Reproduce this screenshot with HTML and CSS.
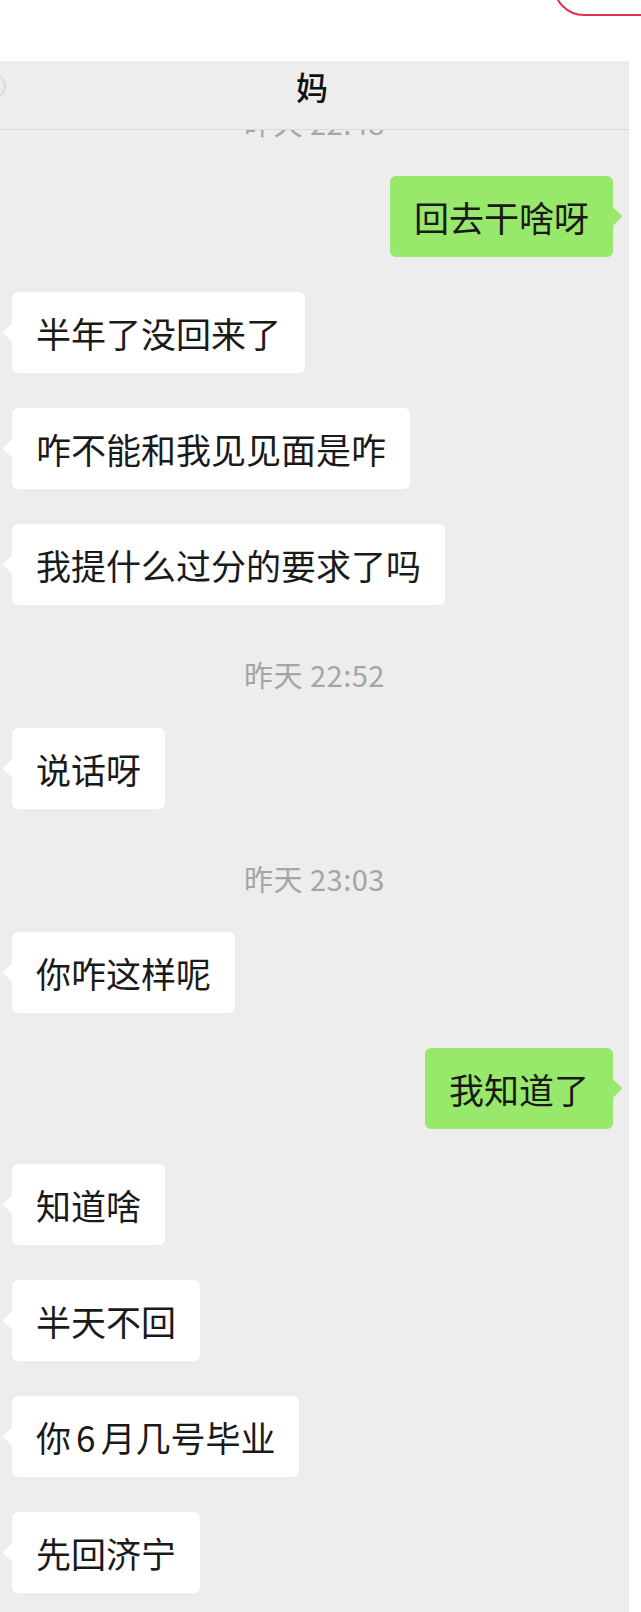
FILE: index.html
```html
<!DOCTYPE html>
<html lang="zh-CN">

<head>
    <meta charset="UTF-8">
    <meta name="viewport" content="width=device-width, initial-scale=1.0">
    <title>妈</title>
    <link rel="stylesheet" href="styles.css">
</head>

<body>
    <!-- 顶部白条 -->
    <div class="top-bar">
        <div class="top-pill"></div>
    </div>

    <!-- 聊天窗口 -->
    <div class="chat">
        <div class="chat-header">
            <span class="back-ghost"></span>
            <h1 class="chat-title">妈</h1>
        </div>

        <div class="messages">
            <div class="time">昨天 22:48</div>
            <div class="row row-me"><div class="bubble bubble-me">回去干啥呀</div></div>
            <div class="row"><div class="bubble">半年了没回来了</div></div>
            <div class="row"><div class="bubble">咋不能和我见见面是咋</div></div>
            <div class="row"><div class="bubble">我提什么过分的要求了吗</div></div>
            <div class="time">昨天 22:52</div>
            <div class="row"><div class="bubble">说话呀</div></div>
            <div class="time">昨天 23:03</div>
            <div class="row"><div class="bubble">你咋这样呢</div></div>
            <div class="row row-me"><div class="bubble bubble-me">我知道了</div></div>
            <div class="row"><div class="bubble">知道啥</div></div>
            <div class="row"><div class="bubble">半天不回</div></div>
            <div class="row"><div class="bubble">你<span class="num">6</span>月几号毕业</div></div>
            <div class="row"><div class="bubble">先回济宁</div></div>
        </div>
    </div>
</body>

</html>
```

FILE: styles.css
```css
/* 全局 */
body {
    margin: 0;
    padding: 0;
    width: 641px;
    height: 1612px;
    background: #ffffff;
    font-family: "Noto Sans CJK SC", "Noto Sans", sans-serif;
    overflow: hidden;
}

/* 顶部白条 */
.top-bar {
    position: relative;
    height: 61px;
    overflow: hidden;
}

.top-pill {
    position: absolute;
    left: 553px;
    top: -46px;
    width: 140px;
    height: 58px;
    border: 2px solid #e0304f;
    border-radius: 31px;
}

/* 聊天窗口 */
.chat {
    position: relative;
    width: 629px;
    height: 1551px;
    background: #ededed;
    overflow: hidden;
}

.chat-header {
    position: absolute;
    top: 0;
    left: 0;
    right: 0;
    height: 68px;
    background: #ededed;
    border-bottom: 1px solid #d9d9d9;
    z-index: 2;
}

.back-ghost {
    position: absolute;
    left: -18px;
    top: 13px;
    width: 20px;
    height: 20px;
    border: 2px solid #dcdcdc;
    border-radius: 50%;
}

.chat-title {
    margin: 0;
    text-align: center;
    font-size: 32px;
    font-weight: 500;
    line-height: 50px;
    color: #111111;
    padding-right: 5px;
}

/* 消息列表 */
.messages {
    display: flex;
    flex-direction: column;
    gap: 35px;
    padding-top: 27px;
}

.time {
    height: 53px;
    padding-top: 15px;
    box-sizing: border-box;
    line-height: 38px;
    text-align: center;
    font-size: 29px;
    letter-spacing: 0.5px;
    color: #a5a5a5;
}

.row {
    display: flex;
    padding: 0 16px 0 12px;
}

.row-me {
    justify-content: flex-end;
}

.bubble {
    position: relative;
    padding: 17px 24px;
    line-height: 47px;
    font-size: 35px;
    color: #1a1a1a;
    background: #ffffff;
    border-radius: 6px;
    white-space: nowrap;
}

.bubble::before {
    content: "";
    position: absolute;
    top: 50%;
    left: -9px;
    width: 10px;
    height: 20px;
    margin-top: -10px;
    background: inherit;
    clip-path: polygon(100% 0, 8% 44%, 0 50%, 8% 56%, 100% 100%);
}

.bubble-me {
    background: #98e86b;
}

.bubble-me::before {
    left: auto;
    right: -9px;
    clip-path: polygon(0 0, 92% 44%, 100% 50%, 92% 56%, 0 100%);
}

.num {
    margin: 0 5px;
}
```
